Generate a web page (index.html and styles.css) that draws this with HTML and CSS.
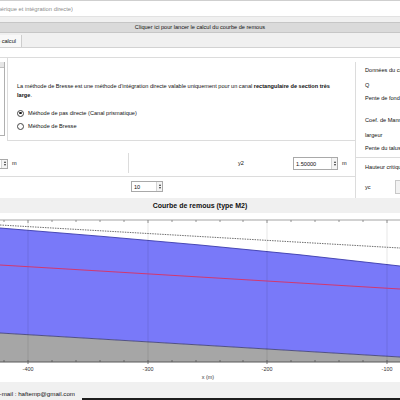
FILE: index.html
```html
<!DOCTYPE html>
<html>
  <head>
    <meta charset="utf-8">
    <link rel="stylesheet" href="styles.css">
  </head>
  <body>
    <div class="window">
      <div class="title-bar">
        <div class="clip title-text"><span>Courbe de remous (méthode numérique et intégration directe)</span></div>
      </div>

      <div class="run-bar">Cliquer ici pour lancer le calcul du courbe de remous</div>

      <div class="tabs">
        <div class="tab clip"><span>Paramètres de calcul</span></div>
      </div>

      <div class="page">
        <div class="form">
          <div class="left">
            <div class="method-row">
              <div class="list-stub"><div class="stub-arrow"></div></div>
              <div class="method">
                <p class="note">La méthode de Bresse est une méthode d'intégration directe valable uniquement pour un canal <b>rectangulaire de section très large</b>.</p>
                <label class="radio"><span class="dot checked"></span>Méthode de pas directe (Canal prismatique)</label>
                <label class="radio"><span class="dot"></span>Méthode de Bresse</label>
              </div>
            </div>

            <div class="depth-row">
              <div class="cell-y1">
                <div class="spin spin-stub">
                  <div class="spin-btns"><span class="up"></span><span class="down"></span></div>
                </div>
                <span class="unit">m</span>
              </div>
              <div class="sep"></div>
              <span class="y2-label">y2</span>
              <div class="spin spin-y2">
                <span class="spin-val">1.50000</span>
                <div class="spin-btns"><span class="up"></span><span class="down"></span></div>
              </div>
              <span class="unit">m</span>
            </div>

            <div class="steps-row">
              <div class="spin spin-steps">
                <span class="spin-val">10</span>
                <div class="spin-btns"><span class="up"></span><span class="down"></span></div>
              </div>
            </div>
          </div>

          <div class="right">
            <div class="group data">
              <div class="row">Données du canal</div>
              <div class="row gap-m">Q</div>
              <div class="row gap-s">Pente de fond</div>
              <div class="row gap-l">Coef. de Manning</div>
              <div class="row gap-m">largeur</div>
              <div class="row gap-s">Pente du talus</div>
            </div>
            <div class="group crit">
              <div class="row">Hauteur critique</div>
              <div class="yc-row"><span>yc</span><span class="yc-field"></span></div>
            </div>
          </div>
        </div>

        <div class="chart-title">Courbe de remous (type M2)</div>

        <div class="chart">
          <svg width="400" height="169" viewBox="0 0 400 169">
            <!-- water body and channel bed -->
            <polygon points="0,15 100,23.2 200,32 300,41.8 400,53 400,144 0,120" fill="#7979f9"/>
            <polyline points="0,15 100,23.2 200,32 300,41.8 400,53" fill="none" stroke="#3b3bab" stroke-width="0.9"/>
            <polygon points="0,120 400,144 400,149 0,149" fill="#a6a6a6"/>
            <line x1="0" y1="120" x2="400" y2="144" stroke="#45457c" stroke-width="0.9"/>

            <!-- grid -->
            <path d="M28 7V149M148 7V149M267 7V149M387 7V149" stroke="rgba(0,0,0,0.12)" stroke-width="0.8"/>

            <!-- critical depth and normal depth -->
            <line x1="0" y1="52" x2="400" y2="76" stroke="#d2386e" stroke-width="1"/>
            <line x1="0" y1="12" x2="400" y2="35" stroke="#6f6f6f" stroke-width="1" stroke-dasharray="1.5 1"/>

            <!-- top axis -->
            <line x1="0" y1="7" x2="400" y2="7" stroke="#a4a4a4" stroke-width="1"/>
            <path d="M4 7v2M52 7v2M76 7v2M100 7v2M124 7v2M172 7v2M196 7v2M220 7v2M243 7v2M291 7v2M315 7v2M339 7v2M363 7v2M28 7v3M148 7v3M267 7v3M387 7v3" stroke="#7a7a7a" stroke-width="0.8"/>

            <!-- bottom axis -->
            <line x1="0" y1="149" x2="400" y2="149" stroke="#5a5a5a" stroke-width="1.2"/>
            <path d="M4 149v-2M52 149v-2M76 149v-2M100 149v-2M124 149v-2M172 149v-2M196 149v-2M220 149v-2M243 149v-2M291 149v-2M315 149v-2M339 149v-2M363 149v-2M28 151v-4M148 151v-4M267 151v-4M387 151v-4" stroke="#555" stroke-width="0.8"/>

            <g class="tick-labels">
              <text x="28" y="157.5">-400</text>
              <text x="148" y="157.5">-300</text>
              <text x="267" y="157.5">-200</text>
              <text x="387" y="157.5">-100</text>
            </g>
            <text class="axis-label" x="208" y="165.5">x (m)</text>
          </svg>
        </div>
      </div>

      <div class="status">
        <div class="clip mail"><span>E-mail : haftemp@gmail.com</span></div>
      </div>
      <div class="taskbar"></div>
    </div>
  </body>
</html>
```

FILE: styles.css
```css
body {
  margin: 0;
  width: 400px;
  height: 400px;
  overflow: hidden;
  background: #f0f0f0;
  font-family: "Liberation Sans", Arial, sans-serif;
  font-size: 5.6px;
  color: #111;
}

.window {
  width: 400px;
  height: 400px;
  display: flex;
  flex-direction: column;
}

/* text cut off by the left edge of the window */
.clip {
  display: flex;
  justify-content: flex-end;
  overflow: hidden;
  white-space: nowrap;
}

.title-bar {
  height: 15px;
  background: #fff;
  border-top: 1px solid #cfcfcf;
  border-bottom: 1px solid #e2e2e2;
  display: flex;
  align-items: center;
}

.title-text {
  width: 73px;
  color: #8c8c8c;
  font-size: 5.8px;
}

.run-bar {
  margin-top: 5px;
  height: 9px;
  line-height: 9px;
  background: #dadada;
  border-top: 1px solid #c6c6c6;
  border-bottom: 1px solid #c6c6c6;
  text-align: center;
}

.tabs {
  margin-top: 2px;
  height: 12px;
  border-bottom: 1px solid #d2d2d2;
  display: flex;
}

.tab {
  width: 16px;
  padding-right: 5px;
  background: #f8f8f8;
  border-right: 1px solid #cdcdcd;
  align-items: center;
}

.page {
  flex: 1;
  background: #fff;
  padding-top: 9px;
  display: flex;
  flex-direction: column;
}

.form {
  display: grid;
  grid-template-columns: 355px 45px;
  border-top: 1px solid #dcdcdc;
}

/* left column */
.method-row {
  height: 83px;
  display: flex;
}

.list-stub {
  width: 4px;
  height: 73px;
  margin-top: 4px;
  border-right: 1px solid #b0b0b0;
  border-bottom: 1px solid #b0b0b0;
}

.stub-arrow {
  height: 5px;
  background: #e6e6e6;
  border-bottom: 1px solid #c0c0c0;
}

.method {
  flex: 1;
  margin-left: 2px;
  padding: 24px 0 0 9px;
  border-left: 1px solid #dcdcdc;
  border-bottom: 1px solid #dcdcdc;
  box-sizing: border-box;
}

.note {
  margin: 0 0 6.5px;
  line-height: 9px;
  width: 322px;
}

.radio {
  height: 13px;
  display: flex;
  align-items: center;
}

.dot {
  width: 5px;
  height: 5px;
  border: 1px solid #444;
  border-radius: 50%;
  margin: 0 4px 0 0;
  display: flex;
  align-items: center;
  justify-content: center;
}

.dot.checked::after {
  content: "";
  width: 2.6px;
  height: 2.6px;
  border-radius: 50%;
  background: #1a1a1a;
}

.depth-row {
  height: 36px;
  box-sizing: border-box;
  padding-top: 16px;
  border-bottom: 1px solid #dcdcdc;
  display: flex;
  align-items: flex-start;
}

.cell-y1 {
  width: 128px;
  height: 13px;
  display: flex;
  align-items: center;
}

.sep {
  width: 1px;
  height: 20px;
  margin-top: -4px;
  background: #dcdcdc;
}

.y2-label {
  width: 7px;
  margin-left: 109px;
  line-height: 13px;
}

.unit {
  margin-left: 4px;
  line-height: 13px;
}

.spin {
  display: flex;
  height: 13px;
  box-sizing: border-box;
  background: #fff;
  border: 1px solid #a9a9a9;
}

.spin-val {
  flex: 1;
  padding-left: 2px;
  display: flex;
  align-items: center;
}

.spin-btns {
  width: 5px;
  border-left: 1px solid #d4d4d4;
  background: #f4f4f4;
  display: flex;
  flex-direction: column;
  justify-content: center;
  align-items: center;
  gap: 1px;
}

.up,
.down {
  width: 0;
  height: 0;
  border-left: 1.5px solid transparent;
  border-right: 1.5px solid transparent;
}

.up {
  border-bottom: 2px solid #333;
}

.down {
  border-top: 2px solid #333;
}

.spin-stub {
  width: 8px;
  border-left: none;
  justify-content: flex-end;
  height: 10px;
}

.spin-y2 {
  width: 45px;
  margin-left: 48px;
}

.steps-row {
  height: 21px;
  padding: 4px 0 0 131px;
  box-sizing: border-box;
}

.spin-steps {
  width: 32px;
  height: 11px;
}

/* right column */
.group {
  border-left: 1px solid #dcdcdc;
  padding-left: 9px;
  white-space: nowrap;
  overflow: hidden;
}

.data {
  margin-top: 4px;
  height: 95px;
  box-sizing: border-box;
}

.row {
  height: 8px;
  line-height: 8px;
}

.data .row:first-child {
  margin-top: 4px;
}

.gap-s {
  margin-top: 5px;
}

.gap-m {
  margin-top: 7px;
}

.gap-l {
  margin-top: 14px;
}

.crit {
  height: 41px;
  border-top: 1px solid #dcdcdc;
  box-sizing: border-box;
  padding-top: 5px;
}

.yc-row {
  margin-top: 9px;
  height: 14px;
  display: flex;
  align-items: center;
  justify-content: space-between;
}

.yc-field {
  width: 5px;
  height: 14px;
  box-sizing: border-box;
  background: #f2f2f2;
  border: 1px solid #c8c8c8;
  border-right: none;
}

/* chart */
.chart-title {
  height: 15px;
  line-height: 15px;
  background: #f0f0f0;
  text-align: center;
  font-weight: bold;
  font-size: 7px;
}

.chart {
  height: 169px;
  background: #fff;
}

.chart svg {
  display: block;
}

.tick-labels text,
.axis-label {
  font-family: "Liberation Sans", Arial, sans-serif;
  font-size: 5.4px;
  fill: #333;
  text-anchor: middle;
}

.status {
  height: 16px;
  background: #f0f0f0;
  padding-top: 8px;
  box-sizing: border-box;
}

.mail {
  width: 75px;
  font-size: 6.2px;
  line-height: 8px;
}

.taskbar {
  height: 2px;
  margin-left: 82px;
  background: #1d1d1d;
}
```
